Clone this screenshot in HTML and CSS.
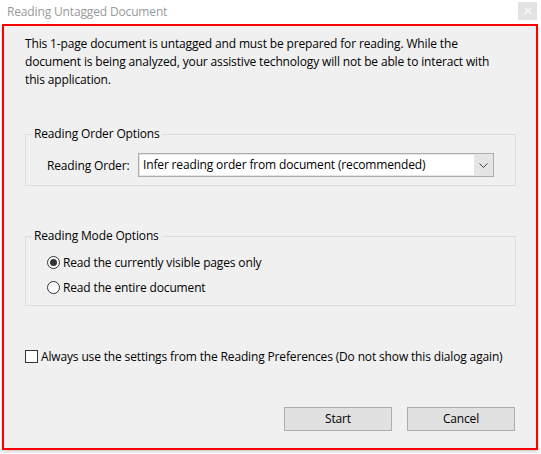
FILE: index.html
```html
<!DOCTYPE html>
<html lang="en">
<head>
<meta charset="utf-8">
<title>Reading Untagged Document</title>
<link rel="stylesheet" href="styles.css">
</head>
<body>
<div class="window">
  <div class="titlebar">
    <span class="title">Reading Untagged Document</span>
    <span class="close">
      <svg width="8" height="8" viewBox="0 0 8 8"><path d="M1 1 L7 7 M7 1 L1 7" stroke="#f7f7f7" stroke-width="1.6" fill="none"/></svg>
    </span>
  </div>
  <div class="dialog">
    <p class="intro">This 1-page document is untagged and must be prepared for reading. While the<br>document is being analyzed, your assistive technology will not be able to interact with<br>this application.</p>

    <fieldset class="group group-order">
      <legend>Reading Order Options</legend>
      <div class="order-row">
        <span class="label">Reading Order:</span>
        <div class="combo">
          <div class="combo-field">Infer reading order from document (recommended)</div>
          <div class="combo-arrow">
            <svg width="9" height="5" viewBox="0 0 9 5"><path d="M0.5 0.5 L4.5 4.5 L8.5 0.5" stroke="#404040" stroke-width="1" fill="none"/></svg>
          </div>
        </div>
      </div>
    </fieldset>

    <fieldset class="group group-mode">
      <legend>Reading Mode Options</legend>
      <div class="radios">
        <div class="radio-row"><span class="radio checked"></span>Read the currently visible pages only</div>
        <div class="radio-row"><span class="radio"></span>Read the entire document</div>
      </div>
    </fieldset>

    <div class="check-row"><span class="checkbox"></span>Always use the settings from the Reading Preferences (Do not show this dialog again)</div>

    <div class="buttons">
      <button class="btn">Start</button>
      <button class="btn">Cancel</button>
    </div>
  </div>
</div>
</body>
</html>
```

FILE: styles.css
```css
* { box-sizing: border-box; }
html, body {
  margin: 0;
  padding: 0;
  background: #ffffff;
}
body {
  width: 541px;
  height: 454px;
  overflow: hidden;
  font-family: "Open Sans", "Noto Sans", sans-serif;
  font-size: 12px;
  letter-spacing: -0.15px;
  color: #000;
}
.window {
  width: 541px;
}
.titlebar {
  height: 24px;
  display: flex;
  align-items: flex-start;
  justify-content: space-between;
  background: #fff;
}
.title {
  margin: 4px 0 0 7px;
  line-height: 16px;
  color: #9a9a9a;
}
.close {
  width: 19px;
  height: 18px;
  margin: 2px 4px 0 0;
  background: #e3e3e3;
  display: flex;
  align-items: center;
  justify-content: center;
}
.dialog {
  margin: 0 3px 0 2px;
  height: 426px;
  border: 2px solid #ff0000;
  background: #f0f0f0;
  box-shadow: 0 2px 3px rgba(0,0,0,0.18);
  display: flex;
  flex-direction: column;
}
.intro {
  margin: 9px 0 0 21px;
  line-height: 18px;
}
.group {
  margin: 0 20px 0 21px;
  padding: 0;
  border: 1px solid #dcdcdc;
  min-width: 0;
}
.group legend {
  margin-left: 6px;
  padding: 0 2px;
  line-height: 16px;
}
.group-order { margin-top: 37px; }
.group-mode { margin-top: 42px; }
.order-row {
  display: flex;
  align-items: center;
  padding: 11px 0 8px 21px;
}
.label {
  width: 91px;
}
.combo {
  width: 356px;
  height: 24px;
  border: 1px solid #adadad;
  background: #e5e5e5;
  display: flex;
  padding: 1px;
}
.combo-field {
  flex: 1;
  background: #fff;
  line-height: 20px;
  padding-left: 3px;
}
.combo-arrow {
  width: 18px;
  display: flex;
  align-items: center;
  justify-content: center;
}
.radios {
  padding: 6px 0 5px 21px;
}
.radio-row {
  height: 25px;
  display: flex;
  align-items: center;
}
.radio {
  width: 13px;
  height: 13px;
  border: 1px solid #333;
  border-radius: 50%;
  background: #fff;
  margin-right: 3px;
  display: flex;
  align-items: center;
  justify-content: center;
}
.radio.checked::after {
  content: "";
  width: 7px;
  height: 7px;
  border-radius: 50%;
  background: #333;
}
.check-row {
  margin: 41px 0 0 21px;
  height: 18px;
  display: flex;
  align-items: center;
}
.checkbox {
  width: 13px;
  height: 13px;
  border: 1px solid #333;
  background: #fff;
  margin-right: 3px;
}
.buttons {
  margin-top: 42px;
  display: flex;
  justify-content: flex-end;
  gap: 15px;
  padding-right: 21px;
}
.btn {
  width: 108px;
  height: 24px;
  border: 1px solid #adadad;
  background: #e1e1e1;
  font-family: inherit;
  font-size: 12px;
  letter-spacing: inherit;
  color: #000;
  padding: 0;
  line-height: 22px;
}
```
